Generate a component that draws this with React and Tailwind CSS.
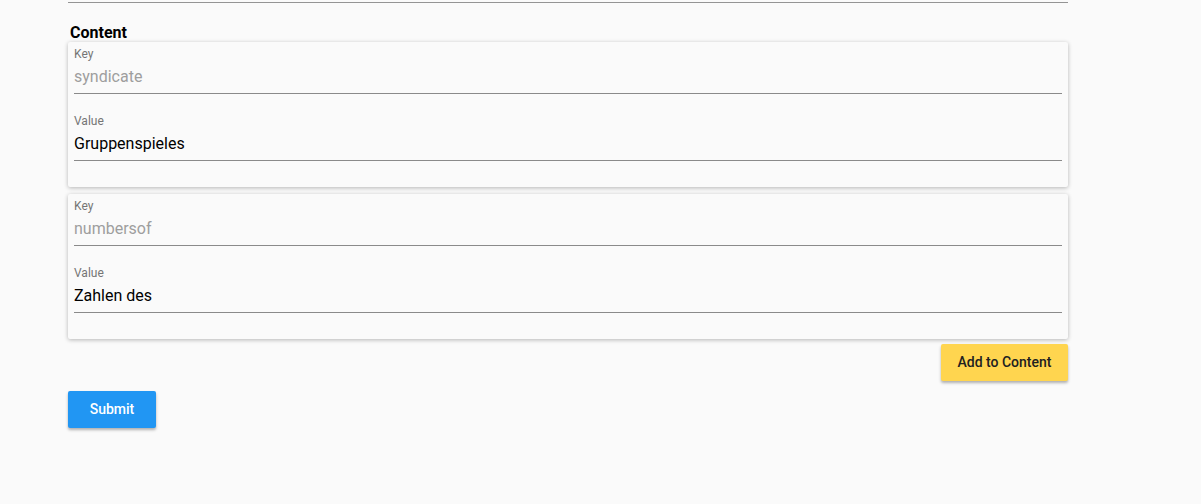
import React from 'react';

function Field({ label, value, disabled }) {
  return (
    <div>
      <div className="text-[12px] leading-[14px] text-[#757575]">{label}</div>
      <div
        className={`pt-1 pb-1 border-b border-[#8a8a8a] text-[16px] leading-[24px] ${
          disabled ? 'text-[#9e9e9e]' : 'text-[#000000]'
        }`}
      >
        {value}
      </div>
    </div>
  );
}

function ContentCard({ keyName, value }) {
  return (
    <div className="bg-[#fafafa] rounded-[2px] shadow-[0_1px_4px_rgba(0,0,0,0.28)] px-[6px] pt-[5px] pb-[26px] flex flex-col gap-5">
      <Field label="Key" value={keyName} disabled />
      <Field label="Value" value={value} />
    </div>
  );
}

export default function App() {
  const items = [
    { key: 'syndicate', value: 'Gruppenspieles' },
    { key: 'numbersof', value: 'Zahlen des' },
  ];
  return (
    <div className="min-h-[504px] bg-[#fafafa] font-['Roboto',sans-serif]">
      <div className="ml-[68px] w-[1000px] pt-[2px]">
        <div className="border-t border-[#949494]" />
        <h2 className="mt-5 pl-[2px] text-[16px] leading-[19px] font-bold text-black">Content</h2>
        <div className="flex flex-col gap-[7px]">
          {items.map((it) => (
            <ContentCard key={it.key} keyName={it.key} value={it.value} />
          ))}
        </div>
        <div className="flex justify-end mt-[5px]">
          <button className="h-[37px] w-[127px] rounded-[2px] bg-[#ffd54f] text-[14px] font-medium text-[#212121] shadow-[0_2px_3px_rgba(0,0,0,0.3)]">
            Add to Content
          </button>
        </div>
        <button className="mt-[10px] h-[37px] w-[88px] rounded-[2px] bg-[#2196f3] text-[14px] font-medium text-white shadow-[0_2px_3px_rgba(0,0,0,0.3)]">
          Submit
        </button>
      </div>
    </div>
  );
}
